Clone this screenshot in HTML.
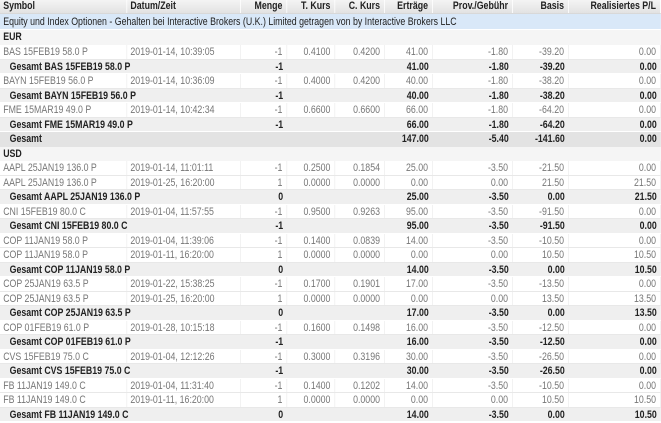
<!DOCTYPE html>
<html><head><meta charset="utf-8"><style>
html,body{margin:0;padding:0;background:#fff;width:661px;height:423px;overflow:hidden}
#w{width:826px;transform:scaleX(0.8);transform-origin:0 0;font-family:"Liberation Sans",Arial,sans-serif;font-size:11px}
.r{display:grid;grid-template-columns:159px 142px 58px 60px 62px 60px 100px 70px 115px;height:14.52px;box-sizing:border-box}
.r>div{padding:0 5px 0 4px;white-space:nowrap;overflow:hidden;text-align:right;line-height:14px}
.h{height:14px;background:linear-gradient(#f4f4f4,#e2e2e2);font-weight:bold;color:#222;border-bottom:1px solid #d8d8d8}
.h>div{border-right:1px solid #fff;line-height:13px}
.h>div:nth-child(-n+2){text-align:left}
.t{height:16px;background:#d9e8f8;color:#222;padding-left:4px;line-height:16px;white-space:nowrap;border-bottom:1px solid #fff;box-sizing:border-box}
.c{height:15px;background:#f5f5f5;font-weight:bold;color:#222;padding-left:4px;line-height:15px}
.d{color:#777;border-bottom:1px solid #e8e8e8}
.d>div{border-right:1px solid #eee}
.d>div:nth-child(-n+2){text-align:left}
.g{background:#efefef;font-weight:bold;color:#222;border-bottom:1px solid #fff}
.g>div:first-child{grid-column:1/3;text-align:left;padding-left:12px}
.gg{background:#e3e3e3;font-weight:bold;color:#222}
.gg>div:first-child{grid-column:1/3;text-align:left;padding-left:12px}
</style></head><body><div id="w">
<div class="r h"><div>Symbol</div><div>Datum/Zeit</div><div>Menge</div><div>T. Kurs</div><div>C. Kurs</div><div>Erträge</div><div>Prov./Gebühr</div><div>Basis</div><div>Realisiertes P/L</div></div>
<div class="t">Equity und Index Optionen - Gehalten bei Interactive Brokers (U.K.) Limited getragen von by Interactive Brokers LLC</div>
<div class="c">EUR</div>
<div class="r d"><div>BAS 15FEB19 58.0 P</div><div>2019-01-14, 10:39:05</div><div>-1</div><div>0.4100</div><div>0.4200</div><div>41.00</div><div>-1.80</div><div>-39.20</div><div>0.00</div></div>
<div class="r g"><div>Gesamt BAS 15FEB19 58.0 P</div><div>-1</div><div></div><div></div><div>41.00</div><div>-1.80</div><div>-39.20</div><div>0.00</div></div>
<div class="r d"><div>BAYN 15FEB19 56.0 P</div><div>2019-01-14, 10:36:09</div><div>-1</div><div>0.4000</div><div>0.4200</div><div>40.00</div><div>-1.80</div><div>-38.20</div><div>0.00</div></div>
<div class="r g"><div>Gesamt BAYN 15FEB19 56.0 P</div><div>-1</div><div></div><div></div><div>40.00</div><div>-1.80</div><div>-38.20</div><div>0.00</div></div>
<div class="r d"><div>FME 15MAR19 49.0 P</div><div>2019-01-14, 10:42:34</div><div>-1</div><div>0.6600</div><div>0.6600</div><div>66.00</div><div>-1.80</div><div>-64.20</div><div>0.00</div></div>
<div class="r g"><div>Gesamt FME 15MAR19 49.0 P</div><div>-1</div><div></div><div></div><div>66.00</div><div>-1.80</div><div>-64.20</div><div>0.00</div></div>
<div class="r gg"><div>Gesamt</div><div></div><div></div><div></div><div>147.00</div><div>-5.40</div><div>-141.60</div><div>0.00</div></div>
<div class="c" style="height:14.52px;line-height:14.52px">USD</div>
<div class="r d"><div>AAPL 25JAN19 136.0 P</div><div>2019-01-14, 11:01:11</div><div>-1</div><div>0.2500</div><div>0.1854</div><div>25.00</div><div>-3.50</div><div>-21.50</div><div>0.00</div></div>
<div class="r d"><div>AAPL 25JAN19 136.0 P</div><div>2019-01-25, 16:20:00</div><div>1</div><div>0.0000</div><div>0.0000</div><div>0.00</div><div>0.00</div><div>21.50</div><div>21.50</div></div>
<div class="r g"><div>Gesamt AAPL 25JAN19 136.0 P</div><div>0</div><div></div><div></div><div>25.00</div><div>-3.50</div><div>0.00</div><div>21.50</div></div>
<div class="r d"><div>CNI 15FEB19 80.0 C</div><div>2019-01-04, 11:57:55</div><div>-1</div><div>0.9500</div><div>0.9263</div><div>95.00</div><div>-3.50</div><div>-91.50</div><div>0.00</div></div>
<div class="r g"><div>Gesamt CNI 15FEB19 80.0 C</div><div>-1</div><div></div><div></div><div>95.00</div><div>-3.50</div><div>-91.50</div><div>0.00</div></div>
<div class="r d"><div>COP 11JAN19 58.0 P</div><div>2019-01-04, 11:39:06</div><div>-1</div><div>0.1400</div><div>0.0839</div><div>14.00</div><div>-3.50</div><div>-10.50</div><div>0.00</div></div>
<div class="r d"><div>COP 11JAN19 58.0 P</div><div>2019-01-11, 16:20:00</div><div>1</div><div>0.0000</div><div>0.0000</div><div>0.00</div><div>0.00</div><div>10.50</div><div>10.50</div></div>
<div class="r g"><div>Gesamt COP 11JAN19 58.0 P</div><div>0</div><div></div><div></div><div>14.00</div><div>-3.50</div><div>0.00</div><div>10.50</div></div>
<div class="r d"><div>COP 25JAN19 63.5 P</div><div>2019-01-22, 15:38:25</div><div>-1</div><div>0.1700</div><div>0.1901</div><div>17.00</div><div>-3.50</div><div>-13.50</div><div>0.00</div></div>
<div class="r d"><div>COP 25JAN19 63.5 P</div><div>2019-01-25, 16:20:00</div><div>1</div><div>0.0000</div><div>0.0000</div><div>0.00</div><div>0.00</div><div>13.50</div><div>13.50</div></div>
<div class="r g"><div>Gesamt COP 25JAN19 63.5 P</div><div>0</div><div></div><div></div><div>17.00</div><div>-3.50</div><div>0.00</div><div>13.50</div></div>
<div class="r d"><div>COP 01FEB19 61.0 P</div><div>2019-01-28, 10:15:18</div><div>-1</div><div>0.1600</div><div>0.1498</div><div>16.00</div><div>-3.50</div><div>-12.50</div><div>0.00</div></div>
<div class="r g"><div>Gesamt COP 01FEB19 61.0 P</div><div>-1</div><div></div><div></div><div>16.00</div><div>-3.50</div><div>-12.50</div><div>0.00</div></div>
<div class="r d"><div>CVS 15FEB19 75.0 C</div><div>2019-01-04, 12:12:26</div><div>-1</div><div>0.3000</div><div>0.3196</div><div>30.00</div><div>-3.50</div><div>-26.50</div><div>0.00</div></div>
<div class="r g"><div>Gesamt CVS 15FEB19 75.0 C</div><div>-1</div><div></div><div></div><div>30.00</div><div>-3.50</div><div>-26.50</div><div>0.00</div></div>
<div class="r d"><div>FB 11JAN19 149.0 C</div><div>2019-01-04, 11:31:40</div><div>-1</div><div>0.1400</div><div>0.1202</div><div>14.00</div><div>-3.50</div><div>-10.50</div><div>0.00</div></div>
<div class="r d"><div>FB 11JAN19 149.0 C</div><div>2019-01-11, 16:20:00</div><div>1</div><div>0.0000</div><div>0.0000</div><div>0.00</div><div>0.00</div><div>10.50</div><div>10.50</div></div>
<div class="r g"><div>Gesamt FB 11JAN19 149.0 C</div><div>0</div><div></div><div></div><div>14.00</div><div>-3.50</div><div>0.00</div><div>10.50</div></div>
</div></body></html>
